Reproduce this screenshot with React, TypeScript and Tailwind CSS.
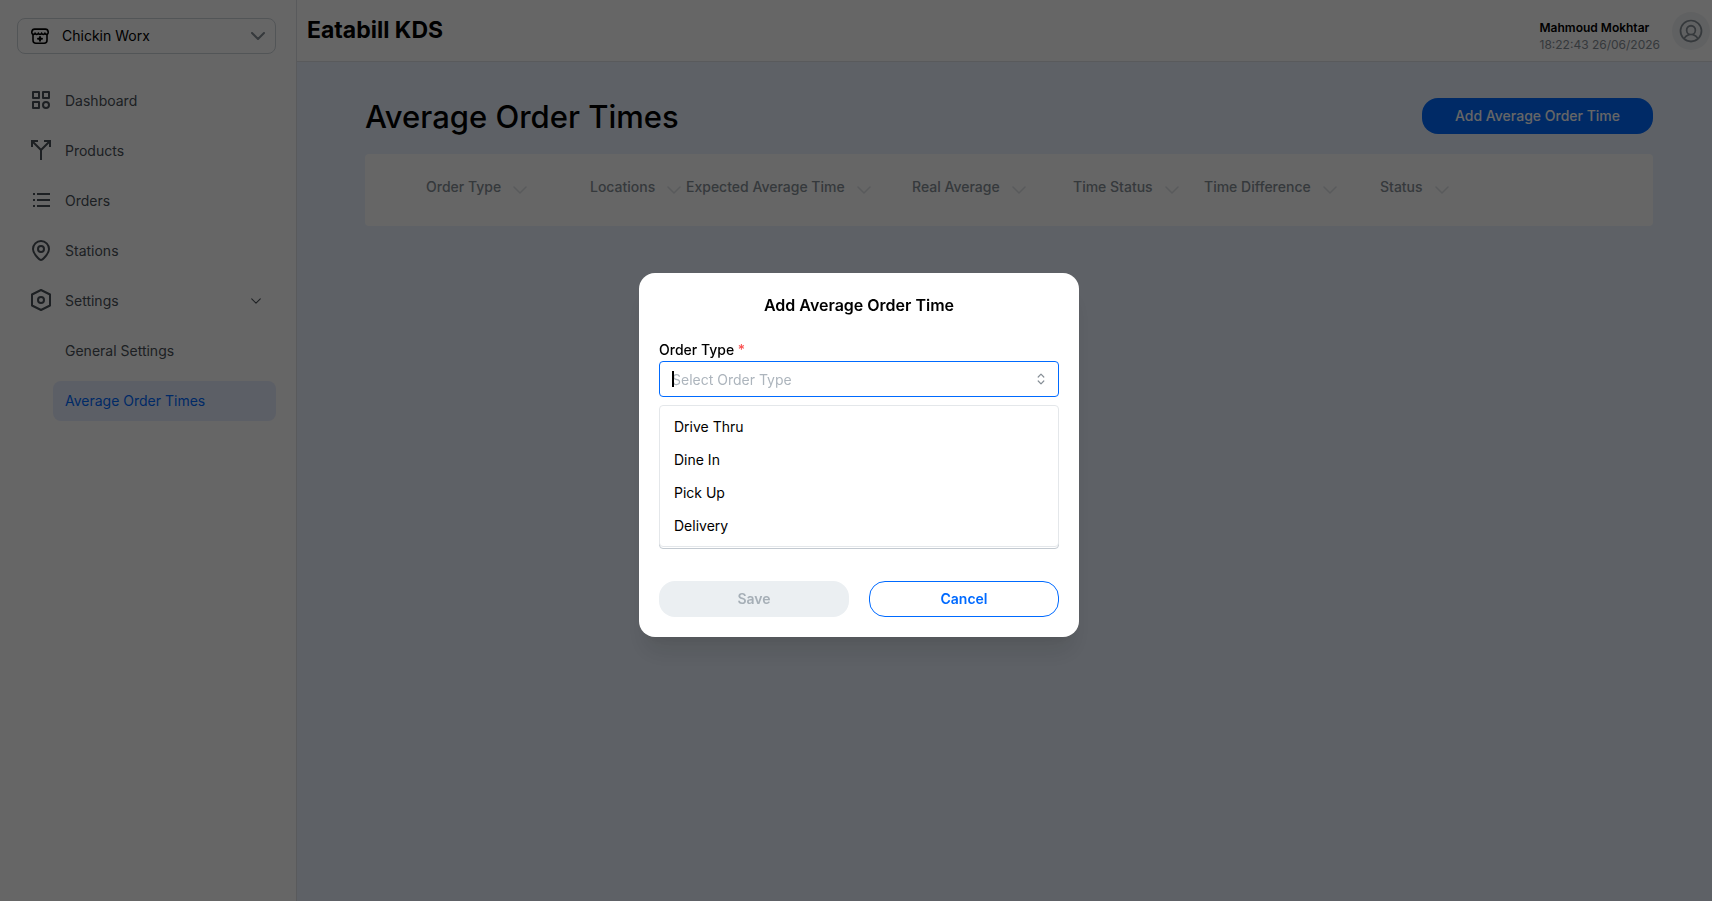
import { PiUserCircle } from 'react-icons/pi';

function Chevron({ className }: { className: string }) {
  return (
    <svg viewBox="0 0 14 8" className={className} fill="none" stroke="currentColor" strokeLinecap="round" strokeLinejoin="round" aria-hidden="true">
      <path d="M1 1l6 6 6-6" />
    </svg>
  );
}

function StoreIcon() {
  return (
    <svg viewBox="0 0 20 20" className="size-5" fill="none" stroke="currentColor" strokeWidth="1.6" strokeLinejoin="round" strokeLinecap="round" aria-hidden="true">
      <path d="M4.600 3.100h10.800c1.500 0 2.600 1.300 2.800 2.800.2 1.500-.7 2.500-1.700 2.500-.9 0-1.500-.6-1.600-1.300-.2.800-.8 1.300-1.600 1.300s-1.500-.5-1.700-1.300c-.1.800-.8 1.300-1.600 1.300s-1.500-.5-1.600-1.300c-.2.800-.9 1.300-1.700 1.300s-1.400-.5-1.600-1.300c-.1.700-.7 1.300-1.600 1.300-1 0-1.900-1-1.700-2.500.2-1.500 1.300-2.800 2.800-2.800z" />
      <path d="M3 8.500v5.700c0 1.900 1 3 2.900 3h8.200c1.900 0 2.900-1.100 2.900-3V8.500" />
      <path d="M10 11v3.800M8 12.800h4" strokeWidth="1.900" />
    </svg>
  );
}

function GridIcon() {
  return (
    <svg viewBox="0 0 24 24" className="size-6" fill="none" stroke="currentColor" strokeWidth="2" aria-hidden="true">
      <path d="M4 3h6v6H4zM14 3h6v6h-6zM4 13h6v6H4z" strokeLinejoin="round" />
      <circle cx="17" cy="16" r="3" />
    </svg>
  );
}

function SplitIcon() {
  return (
    <svg viewBox="0 0 24 24" className="size-6" fill="none" stroke="currentColor" strokeWidth="2" aria-hidden="true">
      <path d="M12 21V11L3 2M12 11l9-9M3 8V2h6M15 2h6v6" />
    </svg>
  );
}

function ListIcon() {
  return (
    <svg viewBox="0 0 24 24" className="size-6" fill="none" stroke="currentColor" strokeWidth="2" aria-hidden="true">
      <path d="M8 5h13M8 11h13M8 17h13M4 5h2M4 11h2M4 17h2" />
    </svg>
  );
}

function PinIcon() {
  return (
    <svg viewBox="0 0 24 24" className="size-6" fill="none" stroke="currentColor" strokeWidth="2" strokeLinejoin="round" aria-hidden="true">
      <path d="M12 21c-.9 0-8-5.700-8-11a8 8 0 0 1 16 0c0 5.300-7.100 11-8 11z" />
      <circle cx="12" cy="10" r="3" />
    </svg>
  );
}

function HexIcon() {
  return (
    <svg viewBox="0 0 24 24" className="size-6" fill="none" stroke="currentColor" strokeWidth="2" strokeLinejoin="round" aria-hidden="true">
      <path d="M12 1l9 4.500v11L12 21l-9-4.500v-11z" />
      <circle cx="12" cy="11" r="3" />
    </svg>
  );
}

const navItems = [
  { label: 'Dashboard', icon: <GridIcon /> },
  { label: 'Products', icon: <SplitIcon /> },
  { label: 'Orders', icon: <ListIcon /> },
  { label: 'Stations', icon: <PinIcon /> },
];

const columns = [
  { label: 'Order Type', width: 'w-[225px] pl-[61px]' },
  { label: 'Locations', width: 'w-24' },
  { label: 'Expected Average Time', width: 'w-[226px]' },
  { label: 'Real Average', width: 'w-[161px]' },
  { label: 'Time Status', width: 'w-[131px]' },
  { label: 'Time Difference', width: 'w-44' },
  { label: 'Status', width: '' },
];

const orderTypes = ['Drive Thru', 'Dine In', 'Pick Up', 'Delivery'];

function Sidebar() {
  return (
    <aside className="w-[297px] shrink-0 border-r border-[#dee2e6] bg-white pt-[18px] pr-5 pl-[17px]">
      <button type="button" className="flex h-9 w-full items-center rounded-lg border border-[#ced4da] pr-2.5 pl-3 text-sm text-black">
        <StoreIcon />
        <span className="ml-3">Chickin Worx</span>
        <Chevron className="ml-auto h-2 w-3.5 stroke-2 text-[#868e96]" />
      </button>
      <nav className="mt-[27px] flex flex-col gap-2.5 text-sm text-[#495057]">
        {navItems.map((item) => (
          <a key={item.label} href="#" className="flex h-10 items-center gap-3 rounded-lg px-3">
            {item.icon}
            {item.label}
          </a>
        ))}
        <button type="button" className="flex h-10 items-center gap-3 rounded-lg pr-[15px] pl-3">
          <HexIcon />
          Settings
          <Chevron className="ml-auto h-1.5 w-2.5 stroke-[1.5]" />
        </button>
        <a href="#" className="ml-9 flex h-10 items-center rounded-lg px-3">General Settings</a>
        <a href="#" className="ml-9 flex h-10 items-center rounded-lg bg-[#e7edff] px-3 text-[#006aff]">Average Order Times</a>
      </nav>
    </aside>
  );
}

function OrderTimeDialog() {
  return (
    <div className="fixed inset-0 flex items-center justify-center bg-black/60 pt-[9px] pl-1.5">
      <section role="dialog" aria-modal="true" aria-labelledby="dialog-title" className="w-[440px] rounded-2xl bg-white p-5 text-black shadow-[0_20px_25px_-5px_rgba(0,0,0,0.1),0_10px_10px_-5px_rgba(0,0,0,0.04)]">
        <h2 id="dialog-title" className="text-center text-base leading-6 font-semibold">Add Average Order Time</h2>
        <form className="mt-6">
          <label htmlFor="order-type" className="block pb-0.5 text-sm leading-[18px] font-medium">
            Order Type <span className="text-[#fa5252]">*</span>
          </label>
          <div className="relative">
            <input id="order-type" placeholder="Select Order Type" className="block h-9 w-full rounded border border-[#006aff] px-3 text-sm outline-none placeholder:text-[#adb5bd]" />
            <span className="absolute top-2.5 left-[13px] h-4 w-0.5 bg-black" />
            <svg viewBox="0 0 10 14" className="absolute top-[11px] right-[13px] h-3.5 w-2.5" fill="none" stroke="#868e96" strokeWidth="1.2" strokeLinecap="round" strokeLinejoin="round" aria-hidden="true">
              <path d="M2.200 5L5 2.200 7.800 5M2.200 9L5 11.800 7.800 9" />
            </svg>
            <ul role="listbox" aria-label="Order Type" className="absolute inset-x-0 top-11 z-10 rounded border border-[#e4e7ea] bg-white p-1 text-sm">
              {orderTypes.map((type) => (
                <li key={type} role="option" aria-selected="false" className="flex h-[33px] items-center px-2.5">{type}</li>
              ))}
            </ul>
          </div>
          <input aria-label="Locations" className="mt-10 block h-9 w-full rounded border border-[#ced4da]" />
          <input aria-label="Expected Average Time" className="mt-10 block h-9 w-full rounded border border-[#c3cad1]" />
          <div className="mt-8 grid grid-cols-2 gap-5 text-sm font-semibold">
            <button type="submit" disabled className="h-9 rounded-2xl bg-[#ebeff2] text-[#a6afb7]">Save</button>
            <button type="button" className="h-9 rounded-2xl border border-[#006aff] text-[#006aff]">Cancel</button>
          </div>
        </form>
      </section>
    </div>
  );
}

export default function App() {
  return (
    <div className="flex min-h-screen bg-[#ebf3ff] font-['Inter',sans-serif]">
      <Sidebar />
      <div className="min-w-0 flex-1">
        <header className="flex h-[62px] items-center justify-between border-b border-[#dee2e6] bg-white pr-0.5 pl-2.5">
          <span className="text-[23px] font-bold text-black">Eatabill KDS</span>
          <div className="flex items-center gap-3">
            <div className="pt-2.5 text-xs leading-[17px]">
              <div className="font-semibold text-black">Mahmoud Mokhtar</div>
              <div className="text-[#868e96]">18:22:43 26/06/2026</div>
            </div>
            <button type="button" aria-label="Account" className="flex size-[38px] items-center justify-center rounded-full bg-[#f1f3f5] text-[#868e96]">
              <PiUserCircle className="size-7" />
            </button>
          </div>
        </header>
        <main className="pt-9 pr-[59px] pl-[68px]">
          <div className="flex h-9 items-center justify-between">
            <h1 className="pt-0.5 text-[31px] leading-9 font-medium text-black">Average Order Times</h1>
            <button type="button" className="h-9 w-[231px] rounded-2xl bg-[#006aff] text-sm font-medium text-white">Add Average Order Time</button>
          </div>
          <div className="mt-5 h-[72px] rounded bg-white pt-[23px]">
            <table className="w-full table-fixed text-left text-sm">
              <thead>
                <tr>
                  {columns.map((column) => (
                    <th key={column.label} scope="col" className={`${column.width} font-medium text-[#868e96]`}>
                      <button type="button" className="flex items-center gap-3 whitespace-nowrap">
                        {column.label}
                        <Chevron className="mt-1.5 h-2 w-3.5 stroke-[1.5] text-[#dee2e6]" />
                      </button>
                    </th>
                  ))}
                </tr>
              </thead>
            </table>
          </div>
        </main>
      </div>
      <OrderTimeDialog />
    </div>
  );
}
